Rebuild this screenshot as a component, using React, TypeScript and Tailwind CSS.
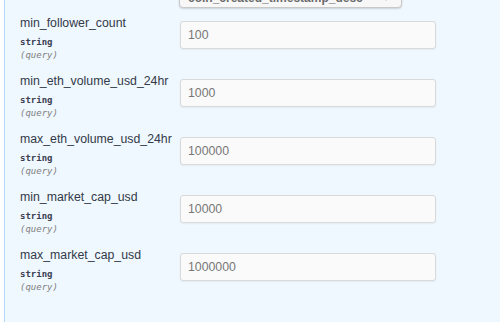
const params = [
  { name: 'min_follower_count', value: '100' },
  { name: 'min_eth_volume_usd_24hr', value: '1000' },
  { name: 'max_eth_volume_usd_24hr', value: '100000' },
  { name: 'min_market_cap_usd', value: '10000' },
  { name: 'max_market_cap_usd', value: '1000000' },
];

function ParamRow({ name, value }: { name: string; value: string }) {
  return (
    <div className="flex h-[58px]">
      <div className="w-[175px] shrink-0 pl-[15px]">
        <div className="text-[12.3px] leading-[15px] text-[#333a48] font-['Liberation_Sans',Arial,sans-serif]">
          {name}
        </div>
        <div className="mt-[5px] text-[9px] leading-[12px] font-bold text-[#3b4151] font-['DejaVu_Sans_Mono',monospace]">
          string
        </div>
        <div className="mt-[1px] text-[9px] leading-[13px] italic text-[#808080] font-['DejaVu_Sans_Mono',monospace]">
          (query)
        </div>
      </div>
      <div className="pt-[5px]">
        <input
          readOnly
          value={value}
          className="w-[256px] h-[28px] rounded-[3px] border border-[#d9d9d9] bg-[#fafafa] px-[7px] text-[12.3px] text-[#777] font-['Liberation_Sans',Arial,sans-serif] shadow-[0_1px_2px_rgba(0,0,0,0.05)] outline-none"
        />
      </div>
    </div>
  );
}

export default function App() {
  return (
    <div className="h-[322px] w-[500px] overflow-hidden bg-white pl-[4px]">
      <div className="h-full border-l-[1.5px] border-[#b8d8f8] bg-[#eff7ff] overflow-hidden">
        <div className="flex h-[8px] items-end pl-[174px]">
          <div className="flex h-[26px] w-[223px] shrink-0 items-center justify-between rounded-[4px] border border-[#c8c8c8] bg-[#f7f7f7] px-[8px] shadow-[0_1px_2px_rgba(0,0,0,0.15)]">
            <span className="mt-[5px] text-[12px] font-bold text-[#6a6a6a] font-['Liberation_Sans',Arial,sans-serif]">
              coin_created_timestamp_desc
            </span>
            <svg width="8" height="6" viewBox="0 0 8 6" className="mr-[3px] mt-[5px]">
              <path d="M1 1.5 L4 4.5 L7 1.5" fill="none" stroke="#555" strokeWidth="1.4" />
            </svg>
          </div>
        </div>
        <div className="pt-[8px]">
          {params.map((p) => (
            <ParamRow key={p.name} name={p.name} value={p.value} />
          ))}
        </div>
      </div>
    </div>
  );
}
